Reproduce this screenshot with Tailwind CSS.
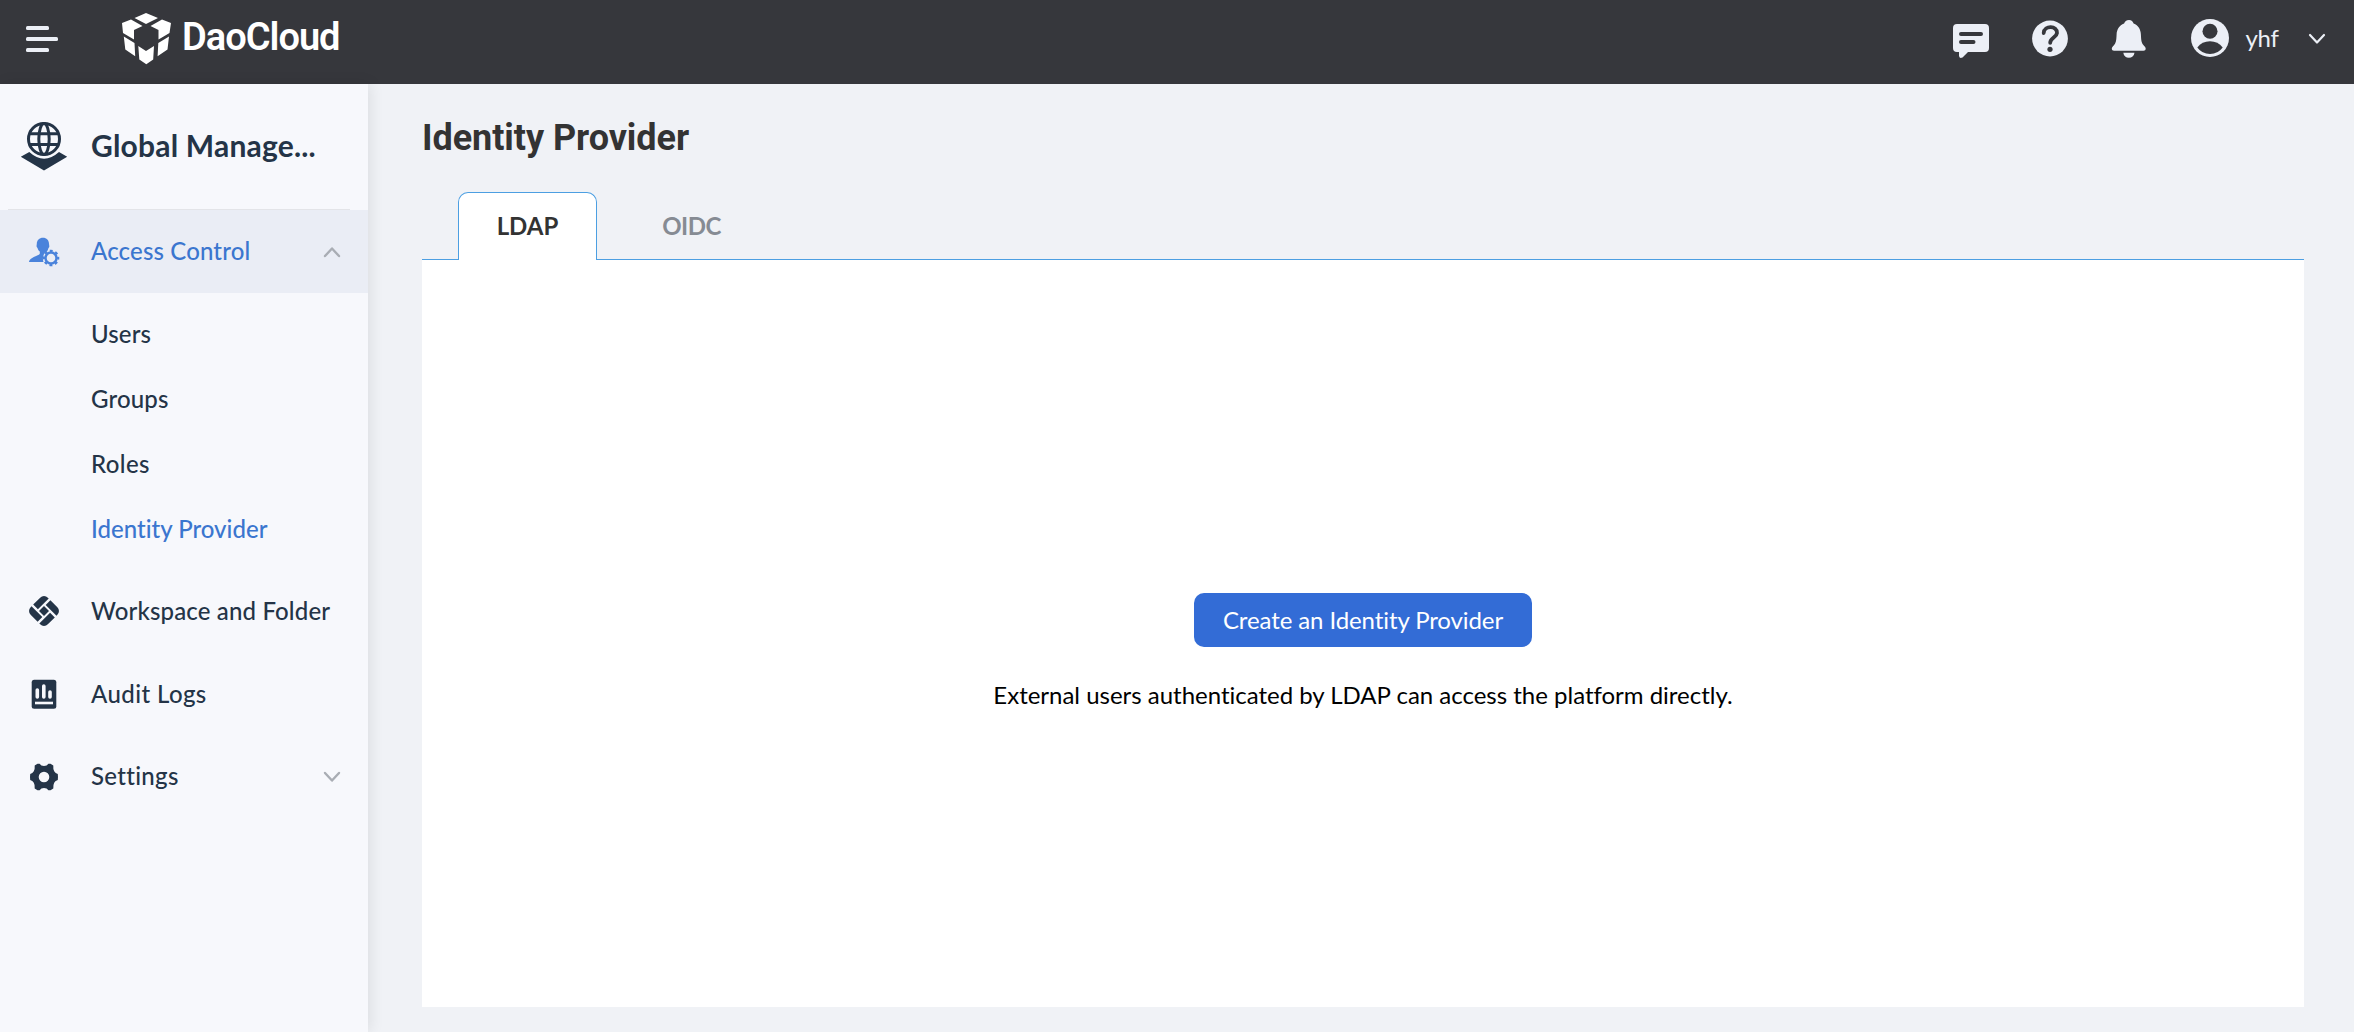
<!DOCTYPE html>
<html lang="en">
<head>
<meta charset="utf-8">
<title>Identity Provider</title>
<script src="https://cdn.jsdelivr.net/npm/@tailwindcss/browser@4"></script>
</head>
<body class="flex h-[1032px] flex-col overflow-hidden bg-[#f0f2f6] font-['Lato',sans-serif] text-2xl text-[#243447]">

<!-- Top bar -->
<header class="flex h-[84px] shrink-0 items-start bg-[#36373c] text-[#eceff6]">
  <svg class="ml-[26px] mt-[26px] h-[26px] w-[32px]" viewBox="0 0 32 26" fill="currentColor">
    <rect width="23" height="4" rx="1.5"/><rect y="11" width="32" height="4" rx="1.5"/><rect y="22" width="23" height="4" rx="1.5"/>
  </svg>
  <div class="ml-[62px] flex text-white">
    <svg class="mt-3 h-[54px] w-[54px]" viewBox="120 12 54 54" fill="currentColor">
      <path d="M134.500 18 146 13l12 5-12 6zM122 23l9-3.500L142.500 26 134 30v9.500L123 33zM171 23l-9-3.500L150.500 26l8 4v9.500l11-6.500zM123.800 36.500 134.500 43l.7 13.300L125.300 49.500zM169 36.500 158.300 43l-.7 13.300 9.900-6.800zM138.300 46l7.700 5 8-5-.8 13.500L146.300 64.200 139.300 59.500z"/>
    </svg>
    <span class="ml-[8px] mt-[15px] font-['Roboto',sans-serif] text-[38px] leading-[45px] font-semibold tracking-[-1px]">DaoCloud</span>
  </div>
  <div class="ml-auto flex">
    <svg class="mt-[24px] h-[34px] w-[36px]" viewBox="0 0 36 34">
      <path fill="currentColor" d="M4 0h28a4 4 0 0 1 4 4v20a4 4 0 0 1-4 4H15l-5.500 5.500Q6 35 6 31.500V28H4a4 4 0 0 1-4-4V4a4 4 0 0 1 4-4z"/>
      <path d="M8 10h20M8 18h12.500" fill="none" stroke="#36373c" stroke-width="4" stroke-linecap="round"/>
    </svg>
    <svg class="ml-[43px] mt-[20px] h-[37px] w-[36px]" viewBox="0 0 36 37">
      <circle cx="18" cy="18.500" r="17.900" fill="currentColor"/>
      <path d="M11.700 13c.5-8 13.800-7.500 13.300 0-.4 4.500-6.800 4.800-6.800 9.800" fill="none" stroke="#36373c" stroke-width="3.800" stroke-linecap="round"/>
      <circle cx="18" cy="29.300" r="2.600" fill="#36373c"/>
    </svg>
    <svg class="ml-[43px] mt-[20px] h-[38px] w-[36px]" viewBox="0 0 36 38" fill="currentColor">
      <path d="M18 0c-2.600 0-4.300 1.600-4.900 3.600C8.300 5.600 5.800 9.600 5.600 14.500 5.300 20 5.200 23 2.700 25.500 1.300 27 .8 27.600.8 28.700c0 1.300.9 2 2.200 2h29.500c1.300 0 2.200-.7 2.200-2 0-1.100-.5-1.700-1.900-3.200-2.500-2.500-2.600-5.500-2.900-11-.2-4.900-2.500-8.900-7.300-10.900C22 1.600 20.500 0 18 0zM12.300 32.700h11.200c-.5 3.300-2.700 5-5.600 5s-5.100-1.700-5.600-5z"/>
    </svg>
    <svg class="ml-[44px] mt-[19px] h-[38px] w-[38px]" viewBox="0 0 38 38">
      <circle cx="19" cy="19" r="19" fill="currentColor"/>
      <circle cx="19" cy="12.300" r="7.500" fill="#36373c"/>
      <path d="M6.300 28.500Q11 22.300 19 22.300t12.700 6.200Q27 35 19 35T6.300 28.500z" fill="#36373c"/>
    </svg>
    <span class="ml-[17px] mt-[23px] w-[33.5px] leading-[30px] font-normal tracking-[-0.3px]">yhf</span>
    <svg class="ml-[29px] mr-[28px] mt-[33px] h-[12px] w-[18px]" viewBox="0 0 18 12" fill="none" stroke="currentColor" stroke-width="2.200" stroke-linecap="round" stroke-linejoin="round"><path d="M2 2l7 7.500L16 2"/></svg>
  </div>
</header>

<div class="flex min-h-0 flex-1">
  <!-- Sidebar -->
  <aside class="z-10 flex w-[368px] shrink-0 flex-col bg-[#f7f8fc] font-medium tracking-[0.15px] shadow-[2px_0_14px_rgba(0,0,0,0.09)]">
    <div class="mx-2 mr-[18px] flex h-[126px] items-center border-b border-[#e3e4e8] pl-[12px]">
      <svg class="h-[50px] w-[48px]" viewBox="20 121.5 48 50">
        <path d="M20.800 156.300l8.500-4.700Q44 165 59 151.600l8.200 4.700L44 170z" fill="currentColor"/>
        <g fill="none" stroke="currentColor" stroke-width="3">
          <circle cx="44" cy="138.500" r="15.500"/><ellipse cx="44" cy="138.500" rx="5.200" ry="15.400"/><path d="M30 133.300h28M30 144h28"/>
        </g>
      </svg>
      <span class="ml-[23px] pb-px text-[30px] font-bold tracking-[0.2px]">Global Manage...</span>
    </div>

    <nav class="flex flex-col">
      <a class="flex h-[83px] items-center bg-[#eaedf5] pl-[28px] pr-[27px] text-[#3b76cf]">
        <svg class="h-[30px] w-[32px]" viewBox="28 238 32 30" fill="#4a83db">
          <path d="M43 238.800c-3.700 0-6.200 2.600-6.200 6 0 1.200-.4 1.800-.2 2.800.2.900.8 1 1 1.700.4 1.600 1.200 2.500 2.200 3.300v2.200c-2 2.700-9.800 3-10.900 8.300h14.600c-1.500-4.300-.2-9 3.800-11 .6-.8.800-1.500 1-2.500.4-.7.900-1 1-2 .1-1-.3-1.600-.3-2.800 0-3.400-2.400-6-6-6z"/>
          <circle cx="51" cy="259" r="5.500" fill="none" stroke="#4a83db" stroke-width="2.400"/>
          <circle cx="51" cy="259" r="7.200" fill="none" stroke="#4a83db" stroke-width="2.200" stroke-dasharray="2.900 2.755" stroke-dashoffset="1.450"/>
        </svg>
        <span class="ml-[31px] pb-px">Access Control</span>
        <svg class="ml-auto h-[12px] w-[18px]" viewBox="0 0 18 12" fill="none" stroke="#a9adb4" stroke-width="2.400" stroke-linecap="round" stroke-linejoin="round"><path d="M2 10l7-7.500L16 10"/></svg>
      </a>
      <div class="flex flex-col py-2">
        <a class="flex h-[65px] items-center pt-px pl-[91px]">Users</a>
        <a class="flex h-[65px] items-center pt-px pl-[91px]">Groups</a>
        <a class="flex h-[65px] items-center pt-px pl-[91px] tracking-[0.4px]">Roles</a>
        <a class="flex h-[65px] items-center pt-px pl-[91px] tracking-[0.01px] text-[#3b76cf]">Identity Provider</a>
      </div>
      <a class="flex h-[83px] items-center pl-[28px]">
        <svg class="h-[32px] w-[32px]" viewBox="0.6 0.6 30.8 30.8">
          <g transform="rotate(45 16 16) translate(32 0) scale(-1 1)" fill="currentColor">
            <path d="M9.500 4.300H19v6.400H4.300V9.500a5.200 5.200 0 0 1 5.200-5.200z"/>
            <path d="M21.300 4.300h1.200a5.200 5.200 0 0 1 5.200 5.200V19h-6.400z"/>
            <path d="M13 21.300h14.700v1.200a5.200 5.200 0 0 1-5.200 5.200H13z"/>
            <path d="M4.300 13h6.400v14.700H9.500a5.200 5.200 0 0 1-5.200-5.200z"/>
            <rect x="12.600" y="12.600" width="6.800" height="6.800"/>
          </g>
        </svg>
        <span class="ml-[31px] pt-px tracking-[0.15px]">Workspace and Folder</span>
      </a>
      <a class="flex h-[83px] items-center pl-[28px]">
        <svg class="h-[32px] w-[32px]" viewBox="0 0 32 32">
          <rect x="3.700" y="1.700" width="24.600" height="29" rx="2.500" fill="currentColor"/>
          <path d="M9.300 12v7M15.800 8v11M22 14v5" stroke="#f7f8fc" stroke-width="3.600" stroke-linecap="round"/>
          <path d="M7 25h18" stroke="#f7f8fc" stroke-width="2.600"/>
        </svg>
        <span class="ml-[31px] pt-px tracking-[0.4px]">Audit Logs</span>
      </a>
      <a class="flex h-[83px] items-center pl-[28px] pr-[27px]">
        <svg class="h-[32px] w-[32px]" viewBox="0 0 32 32">
          <path fill="currentColor" fill-rule="evenodd" d="M9.500 2.800 11.600 2.700Q13 5 16 5t4.400-2.300l2.100.1 2.800 1.700Q25 8.300 26.200 10.300t3.600 2.600q.4 3.100 0 6.200-2.500.6-3.600 2.600t-.9 5.800l-2.800 1.700-2.100.1Q19 27 16 27t-4.400 2.300l-2.100-.1-2.800-1.700Q7 23.700 5.800 21.700T2.200 19.100q-.4-3.100 0-6.200 2.400-.6 3.600-2.600t.9-5.800zM16 10.700a5.300 5.300 0 1 0 0 10.600 5.300 5.300 0 0 0 0-10.600z"/>
        </svg>
        <span class="ml-[31px] pb-px tracking-[0.3px]">Settings</span>
        <svg class="ml-auto h-[12px] w-[18px]" viewBox="0 0 18 12" fill="none" stroke="#a9adb4" stroke-width="2.400" stroke-linecap="round" stroke-linejoin="round"><path d="M2 2l7 7.500L16 2"/></svg>
      </a>
    </nav>
  </aside>

  <!-- Page content -->
  <main class="flex flex-1 flex-col pb-[25px] pl-[54px] pr-[50px]">
    <h1 class="mt-[33px] font-['Roboto',sans-serif] text-4xl leading-[42px] font-bold tracking-[-0.05px] text-[#333]">Identity Provider</h1>
    <div class="z-10 -mb-px mt-[33px] flex h-[68px] pl-[36px] font-bold">
      <div class="flex w-[139px] items-center justify-center rounded-t-[10px] border border-b-0 border-[#4c9fe2] bg-white pb-px text-[#333]">LDAP</div>
      <div class="flex w-[189px] items-center justify-center text-[#868b93]"><span class="tracking-[-0.5px]">OIDC</span></div>
    </div>
    <section class="flex flex-1 flex-col items-center border-t border-[#4c9fe2] bg-white pt-[333px]">
      <button class="flex h-[54px] w-[338px] items-center justify-center rounded-[10px] bg-[#336cd6] pb-px tracking-[-0.1px] text-white">Create an Identity Provider</button>
      <p class="mt-[32px] leading-[32px] tracking-[-0.01px] text-black">External users authenticated by LDAP can access the platform directly.</p>
    </section>
  </main>
</div>
</body>
</html>
